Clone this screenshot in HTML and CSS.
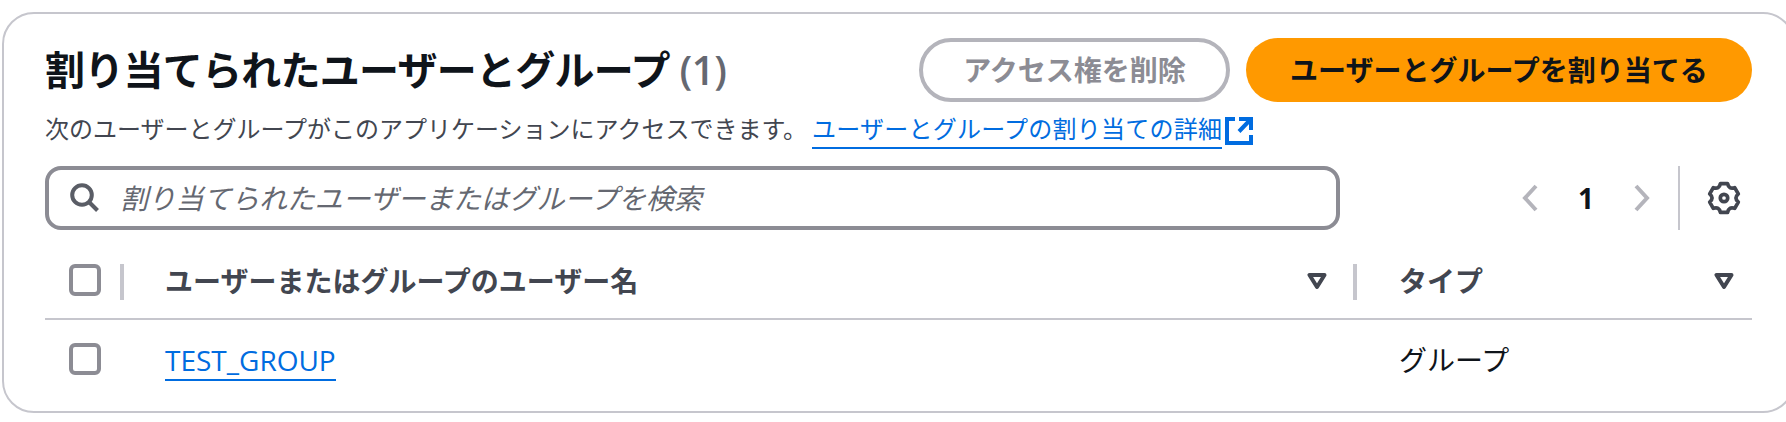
FILE: index.html
```html
<!DOCTYPE html>
<html lang="ja">
<head>
  <meta charset="UTF-8" />
  <title>割り当てられたユーザーとグループ</title>
  <link rel="stylesheet" href="styles.css">
</head>
<body>
  <section class="card">
    <div class="head-row">
      <div class="head-text">
        <h2 class="title">割り当てられたユーザーとグループ <span class="count">(1)</span></h2>
      </div>
      <div class="actions">
        <button class="btn btn-disabled">アクセス権を削除</button>
        <button class="btn btn-primary">ユーザーとグループを割り当てる</button>
      </div>
    </div>

    <p class="desc">
      <span>次のユーザーとグループがこのアプリケーションにアクセスできます。</span>
      <a class="link desc-link" href="#">ユーザーとグループの割り当ての詳細</a>
      <svg class="ext-icon" width="28" height="28" viewBox="0 0 28 28" fill="none">
        <path d="M10 2H2v24h24v-8" />
        <path d="M14 2h12v11M26 2 14 14.5" />
      </svg>
    </p>

    <div class="tools">
      <div class="search">
        <svg class="search-icon" width="30" height="30" viewBox="0 0 30 30" fill="none">
          <circle cx="12" cy="12" r="9.8" />
          <path d="M19 19l8.5 8.5" />
        </svg>
        <input class="search-input" type="text" placeholder="割り当てられたユーザーまたはグループを検索" />
      </div>
      <div class="pager">
        <svg class="chev" width="16" height="28" viewBox="0 0 16 28" fill="none"><path d="M14 2 3 14l11 12" /></svg>
        <span class="page-num">1</span>
        <svg class="chev" width="16" height="28" viewBox="0 0 16 28" fill="none"><path d="M2 2l11 12L2 26" /></svg>
      </div>
      <div class="settings">
        <svg class="gear" width="34" height="34" viewBox="0 0 32 32" fill="none">
          <path d="M12.61 2.42 19.39 2.42Q20.5 8.2 26.07 6.27L29.46 12.14Q25 16 29.46 19.86L26.07 25.73Q20.5 23.8 19.39 29.58L12.61 29.58Q11.5 23.8 5.93 25.73L2.54 19.86Q7 16 2.54 12.14L5.93 6.27Q11.5 8.2 12.61 2.42Z" />
          <circle cx="16" cy="16" r="3.5" />
        </svg>
      </div>
    </div>

    <div class="table">
      <div class="tr th-row">
        <div class="cell cell-check"><input class="check" type="checkbox" /><span class="resizer"></span></div>
        <div class="cell cell-name">
          <span class="th-label">ユーザーまたはグループのユーザー名</span>
          <svg class="sort" width="20" height="18" viewBox="0 0 20 18" fill="none"><path d="M2.5 3h15L10 15Z" /></svg>
          <span class="resizer"></span>
        </div>
        <div class="cell cell-type">
          <span class="th-label">タイプ</span>
          <svg class="sort" width="20" height="18" viewBox="0 0 20 18" fill="none"><path d="M2.5 3h15L10 15Z" /></svg>
        </div>
      </div>
      <div class="tr td-row">
        <div class="cell cell-check"><input class="check" type="checkbox" /></div>
        <div class="cell cell-name"><a class="link row-link" href="#">TEST_GROUP</a></div>
        <div class="cell cell-type">グループ</div>
      </div>
    </div>
  </section>
</body>
</html>
```

FILE: styles.css
```css
* {
  box-sizing: border-box;
}
html, body {
  overflow: hidden;
}
body {
  margin: 0;
  padding: 12px 0 9px 2px;
  background: #fff;
  color: #0f141a;
  font-family: "Open Sans", "Noto Sans CJK JP", sans-serif;
  font-size: 28px;
}
/* the card runs a little past the right edge of the window */
.card {
  width: 1793px;
  height: 401px;
  border: 2px solid #c6c6cd;
  border-radius: 32px;
  padding: 24px 41px 0 41px;
}
.head-row {
  display: flex;
  justify-content: space-between;
  align-items: center;
  height: 64px;
}
.title {
  margin: 0;
  font-size: 40px;
  line-height: 52px;
  font-weight: 700;
  letter-spacing: -0.75px;
}
.count {
  font-weight: 600;
  color: #656871;
  font-family: "Open Sans", sans-serif;
  letter-spacing: -0.4px;
}
.actions {
  display: flex;
  gap: 16px;
}
.btn {
  height: 64px;
  border-radius: 32px;
  font: inherit;
  font-weight: 700;
  line-height: 1;
  padding: 0;
}
.btn-disabled {
  width: 311px;
  background: #fff;
  border: 4px solid #b4b4bb;
  color: #8c8c94;
}
.btn-primary {
  width: 506px;
  background: #ff9900;
  border: none;
  color: #0f141a;
}
.desc {
  display: flex;
  align-items: flex-start;
  margin: 0;
  height: 64px;
  padding-top: 11px;
  font-size: 24px;
  line-height: 32px;
  color: #424650;
}
.link {
  color: #006ce0;
  text-decoration: none;
  border-bottom: 2px solid #006ce0;
}
.desc-link {
  margin-left: 5px;
  padding-bottom: 2px;
  letter-spacing: 0.25px;
}
.row-link {
  margin-top: 4px;
  font-weight: 500;
}
.ext-icon {
  margin: 4px 0 0 3px;
  stroke: #006ce0;
  stroke-width: 4;
}
.tools {
  display: flex;
  align-items: stretch;
  height: 64px;
}
.search {
  display: flex;
  align-items: center;
  width: 1295px;
  border: 4px solid #8c8c94;
  border-radius: 16px;
  padding-left: 21px;
}
.search-icon {
  flex: none;
  stroke: #5a5d66;
  stroke-width: 4;
}
.search-input {
  flex: 1;
  min-width: 0;
  margin-left: 18px;
  border: none;
  outline: none;
  background: none;
  font: inherit;
  font-style: italic;
  letter-spacing: -0.2px;
}
.search-input::placeholder {
  color: #656871;
  opacity: 1;
}
.pager {
  display: flex;
  align-items: center;
  margin-left: 182px;
  width: 158px;
}
.chev {
  stroke: #b4b4bb;
  stroke-width: 4;
}
.page-num {
  width: 96px;
  text-align: center;
  font-weight: 700;
}
.settings {
  display: flex;
  align-items: center;
  width: 73px;
  padding-left: 27px;
  border-left: 2px solid #c6c6cd;
  margin-left: -2px;
}
.gear {
  stroke: #424650;
  stroke-width: 3.5;
  stroke-linejoin: round;
}
.tr {
  display: grid;
  grid-template-columns: 79px 1233px 1fr;
}
.th-row {
  height: 90px;
  padding-top: 12px;
  border-bottom: 2px solid #c6c6cd;
}
.td-row {
  height: 78px;
}
.cell {
  display: flex;
  align-items: center;
  position: relative;
}
.cell-check {
  padding-left: 24px;
}
.cell-name {
  padding-left: 41px;
}
.cell-type {
  padding-left: 42px;
  padding-right: 18px;
}
.check {
  appearance: none;
  width: 32px;
  height: 32px;
  margin: 0;
  border: 4px solid #8c8c94;
  border-radius: 6px;
  background: #fff;
}
.th-label {
  flex: 1;
  font-weight: 700;
  color: #424650;
  padding-bottom: 1px;
}
.sort {
  stroke: #424650;
  stroke-width: 4;
  stroke-linejoin: round;
  margin: 2px 30px 0 0;
}
.cell-type .sort {
  margin-right: 0;
}
.resizer {
  position: absolute;
  right: 0;
  top: 22px;
  width: 4px;
  height: 36px;
  background: #c6c6cd;
}
```
